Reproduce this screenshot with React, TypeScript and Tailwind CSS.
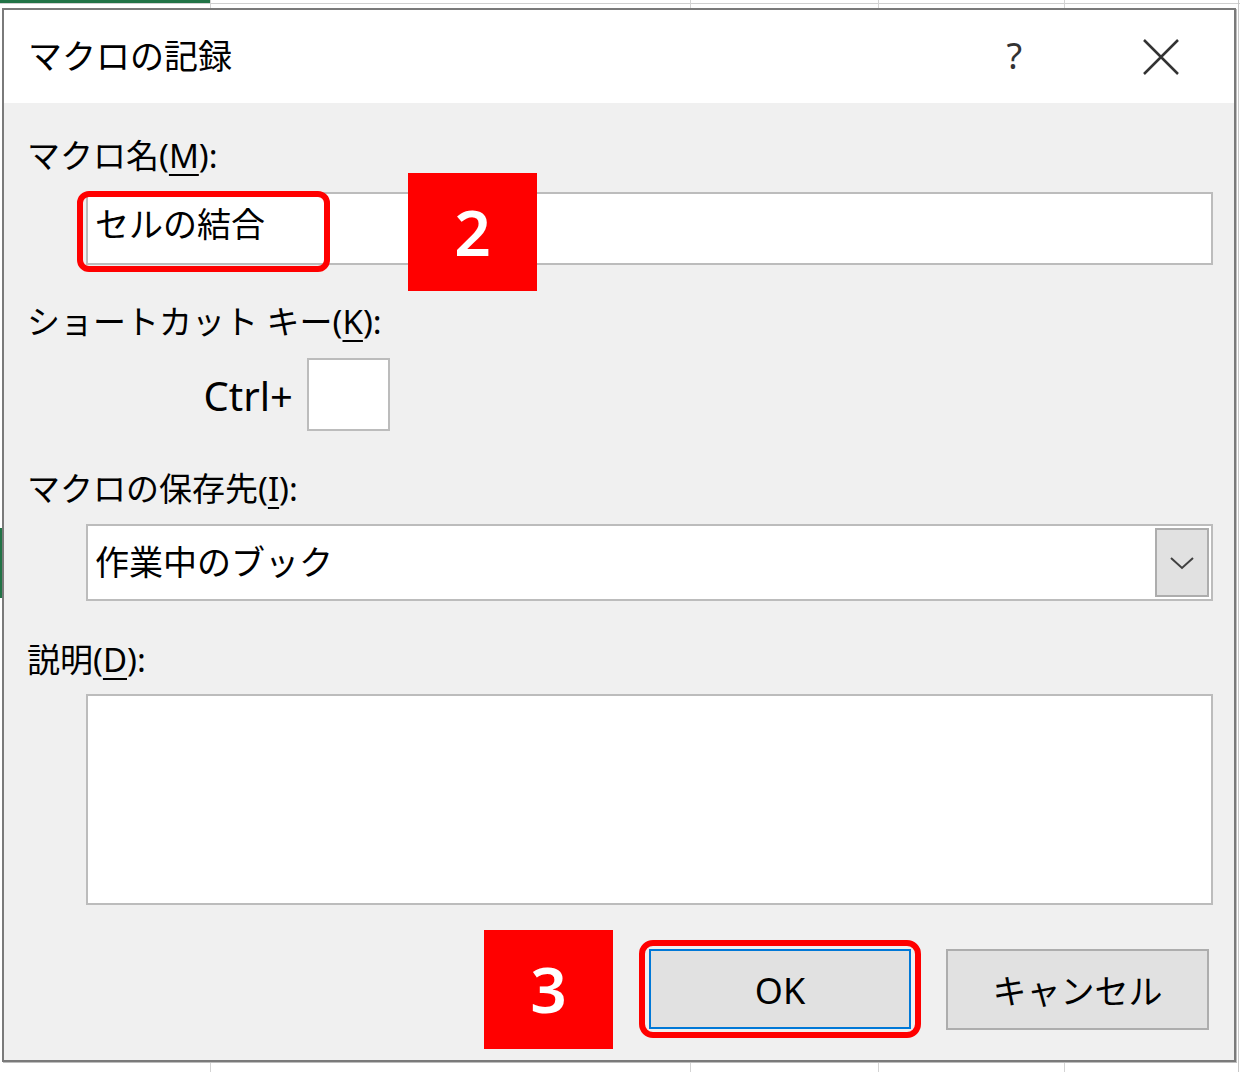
const font = { fontFamily: '"Noto Sans", "Noto Sans CJK JP", sans-serif' };

function U(props: { c: string }) {
    return <span className="underline decoration-2 underline-offset-[6px]">{props.c}</span>;
}

function Label(props: { children: React.ReactNode; mt: string }) {
    return (
        <div className={"h-[44px] leading-[44px] text-[33px] text-black whitespace-nowrap " + props.mt}>
            {props.children}
        </div>
    );
}

export default function App() {
    return (
        <div className="relative w-[1240px] h-[1072px] bg-white overflow-hidden" style={font}>
            {/* excel sheet behind the dialog */}
            <div className="absolute left-0 top-0 w-[210px] h-[3px] bg-[#217346]" />
            <div className="absolute left-0 top-[3px] w-full h-[1px] bg-[#d0d0d0]" />
            <div className="absolute left-[210px] top-0 w-[1px] h-full bg-[#d4d4d4]" />
            <div className="absolute left-[690px] top-0 w-[1px] h-full bg-[#d4d4d4]" />
            <div className="absolute left-[878px] top-0 w-[1px] h-full bg-[#d4d4d4]" />
            <div className="absolute left-[1064px] top-0 w-[1px] h-full bg-[#d4d4d4]" />
            <div className="absolute left-[1238px] top-0 w-[1px] h-full bg-[#c8c8c8]" />
            <div className="absolute left-0 top-[528px] w-[2px] h-[70px] bg-[#217346]" />

            {/* dialog */}
            <div className="relative ml-[2px] mt-[8px] w-[1234px] h-[1054px] border-2 border-[#7a7a7a] shadow-[1px_1px_0_#bdbdbd] flex flex-col bg-[#f0f0f0]">
                <div className="h-[93px] bg-white flex items-center pl-[24px]">
                    <span className="text-[34px] text-black">マクロの記録</span>
                    <span className="ml-auto text-[36px] text-[#333] pb-[2px]">?</span>
                    <svg width="36" height="36" viewBox="0 0 36 36" className="ml-[121px] mr-[55px]">
                        <path d="M1 1 L35 35 M35 1 L1 35" stroke="#333" strokeWidth="2.5" fill="none" />
                    </svg>
                </div>

                <div className="flex-1 flex flex-col pl-[23px] pr-[21px]">
                    <Label mt="mt-[31px]">マクロ名(<U c="M" />):</Label>
                    <div className="relative mt-[14px] ml-[59px] h-[73px] bg-white border-2 border-[#bcbcbc] flex items-center pl-[7px] pb-[8px]">
                        <span className="text-[34px] text-black">セルの結合</span>
                        <div className="absolute left-[-11px] top-[-3px] w-[253px] h-[81px] border-[6px] border-[#ff0000] rounded-[12px]" />
                        <div className="absolute left-[320px] top-[-21px] w-[129px] h-[118px] bg-[#ff0000] flex items-center justify-center">
                            <span className="text-[64px] font-semibold text-white leading-none">2</span>
                        </div>
                    </div>

                    <Label mt="mt-[35px]">ショートカット キー(<U c="K" />):</Label>
                    <div className="mt-[14px] h-[73px] flex items-center">
                        <div className="w-[266px] text-right text-[40px] text-black leading-none pt-[2px]">Ctrl+</div>
                        <div className="ml-[14px] w-[83px] h-[73px] bg-white border-2 border-[#bcbcbc]" />
                    </div>

                    <Label mt="mt-[36px]">マクロの保存先(<U c="I" />):</Label>
                    <div className="mt-[13px] ml-[59px] h-[77px] bg-white border-2 border-[#bcbcbc] flex items-center pl-[7px] p-[2px]">
                        <span className="text-[34px] text-black">作業中のブック</span>
                        <div className="ml-auto w-[54px] h-full bg-[#e1e1e1] border-2 border-[#adadad] flex items-center justify-center">
                            <svg width="26" height="14" viewBox="0 0 26 14">
                                <path d="M2 2 L13 12 L24 2" stroke="#404040" strokeWidth="2" fill="none" />
                            </svg>
                        </div>
                    </div>

                    <Label mt="mt-[37px]">説明(<U c="D" />):</Label>
                    <div className="mt-[12px] ml-[59px] h-[211px] bg-white border-2 border-[#bcbcbc]" />

                    <div className="mt-[44px] h-[80px] flex items-center justify-end pr-[4px]">
                        <div className="w-[129px] h-[119px] bg-[#ff0000] flex items-center justify-center">
                            <span className="text-[64px] font-semibold text-white leading-none">3</span>
                        </div>
                        <div className="relative ml-[36px] w-[262px] h-[80px] bg-[#e1e1e1] border-2 border-[#0078d7] flex items-center justify-center">
                            <span className="text-[36px] text-black pt-[4px]">OK</span>
                            <div className="absolute left-[-12px] top-[-11px] w-[282px] h-[98px] border-[6px] border-[#ff0000] rounded-[14px]" />
                        </div>
                        <div className="ml-[35px] w-[263px] h-[81px] bg-[#e1e1e1] border-2 border-[#adadad] flex items-center justify-center">
                            <span className="text-[34px] text-black pt-[4px]">キャンセル</span>
                        </div>
                    </div>
                </div>
            </div>
        </div>
    );
}
